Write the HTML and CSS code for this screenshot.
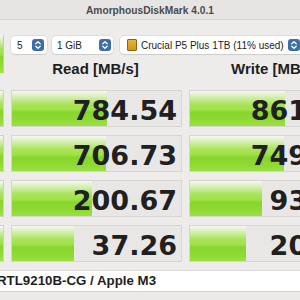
FILE: index.html
```html
<!DOCTYPE html>
<html>
	<head>
		<meta charset="UTF-8">
		<title>AmorphousDiskMark</title>
		<link rel="stylesheet" href="styles.css">
	</head>
	<body>
		<div class="window">
			<div class="titlebar">AmorphousDiskMark 4.0.1</div>
			<div class="bench">
				<div class="all green"></div>
				<div class="toolbar">
					<div class="select count">
						<span class="label">5</span>
						<span class="stepper"><svg width="12" height="12" viewBox="0 0 12 12"><path d="M3.8 4.8 6 2.8 8.2 4.8M3.8 7.2 6 9.2 8.2 7.2" fill="none" stroke="#fff" stroke-width="1.3" stroke-linecap="round" stroke-linejoin="round"/></svg></span>
					</div>
					<div class="select size">
						<span class="label">1 GiB</span>
						<span class="stepper"><svg width="12" height="12" viewBox="0 0 12 12"><path d="M3.8 4.8 6 2.8 8.2 4.8M3.8 7.2 6 9.2 8.2 7.2" fill="none" stroke="#fff" stroke-width="1.3" stroke-linecap="round" stroke-linejoin="round"/></svg></span>
					</div>
					<div class="select disk">
						<span class="drive"></span>
						<span class="label">Crucial P5 Plus 1TB (11% used)</span>
						<span class="stepper"><svg width="12" height="12" viewBox="0 0 12 12"><path d="M3.8 4.8 6 2.8 8.2 4.8M3.8 7.2 6 9.2 8.2 7.2" fill="none" stroke="#fff" stroke-width="1.3" stroke-linecap="round" stroke-linejoin="round"/></svg></span>
					</div>
				</div>
				<div class="head read-head">Read [MB/s]</div>
				<div class="head write-head">Write [MB/s]</div>

				<div class="stub green"></div>
				<div class="cell"><div class="bar" style="width:95px"></div><div class="value">784.54</div></div>
				<div class="cell"><div class="bar" style="width:95px"></div><div class="value">861.59</div></div>

				<div class="stub green"></div>
				<div class="cell"><div class="bar" style="width:94px"></div><div class="value">706.73</div></div>
				<div class="cell"><div class="bar" style="width:94px"></div><div class="value">749.98</div></div>

				<div class="stub green"></div>
				<div class="cell"><div class="bar" style="width:80px"></div><div class="value">200.67</div></div>
				<div class="cell"><div class="bar" style="width:72px"></div><div class="value">93.02</div></div>

				<div class="stub green"></div>
				<div class="cell"><div class="bar" style="width:62px"></div><div class="value">37.26</div></div>
				<div class="cell"><div class="bar" style="width:56px"></div><div class="value">20.43</div></div>
			</div>
			<div class="info">RTL9210B-CG / Apple M3</div>
			<div class="footer"></div>
		</div>
	</body>
</html>
```

FILE: styles.css
```css
body{
	margin: 0;
	font-family: "Liberation Sans", Arial, sans-serif;
	background: #edeceb;
}
.window{
	width: 300px;
	height: 300px;
	overflow: hidden;
	background: #edeceb;
}
.titlebar{
	height: 20px;
	box-sizing: border-box;
	padding-top: 2px;
	line-height: 18px;
	border-bottom: 1px solid #d8d6d5;
	background: #e7e5e4;
	text-align: center;
	font-size: 10.2px;
	font-weight: bold;
	color: #4b4b4b;
}
.bench{
	display: grid;
	grid-template-columns: 4px 171px 171px;
	grid-template-rows: 18px 20px repeat(4, 37px);
	column-gap: 7px;
	row-gap: 8px;
	margin-top: 16px;
}
.green{
	background: linear-gradient(#f5f9f0 0%, #d6efb7 15%, #abe45c 35%, #9fe246 50%, #88d52c 58%, #8fda34 80%, #a0e24a 100%);
}
.all{
	grid-row: 1 / 3;
	align-self: start;
	height: 38px;
	margin-top: -1px;
	border-right: 1px solid #c8c8c8;
	box-sizing: border-box;
}
.stub{
	border: 1px solid #cfcfce;
	border-left: none;
}
.toolbar{
	grid-column: 2 / 4;
	display: flex;
	align-items: center;
	gap: 5px;
}
.select{
	height: 18px;
	box-sizing: border-box;
	display: flex;
	align-items: center;
	background: #fff;
	border-radius: 4px;
	box-shadow: 0 0 0 0.5px rgba(0,0,0,0.12), 0 1px 1px rgba(0,0,0,0.08);
	font-size: 10px;
	color: #222;
	flex-shrink: 0;
}
.label{
	flex: 1;
	white-space: nowrap;
}
.count{
	width: 36px;
	padding: 0 3px 0 6px;
}
.size{
	width: 61px;
	padding: 0 2px 0 5px;
}
.disk{
	width: 183px;
	margin-left: 2px;
	padding: 0 3px 0 7px;
	gap: 4px;
}
.drive{
	width: 10px;
	height: 12px;
	box-sizing: border-box;
	background: linear-gradient(#e6b43a, #cf9518);
	border: 1px solid #8a6414;
	border-radius: 1px;
}
.stepper{
	width: 12px;
	height: 12px;
	border-radius: 3px;
	background: #3e6ea6;
	display: flex;
}
.head{
	align-self: start;
	margin-top: -1px;
	line-height: 15px;
	font-size: 15px;
	font-weight: bold;
	color: #1e1e1e;
	white-space: nowrap;
}
.read-head{
	grid-column: 2;
	text-align: center;
	padding-right: 2px;
}
.write-head{
	grid-column: 3;
	padding-left: 42px;
}
.cell{
	display: grid;
	background: #e8e7e6;
	border: 1px solid #d6d5d4;
	overflow: hidden;
}
.bar, .value{
	grid-area: 1 / 1;
}
.bar{
	background: linear-gradient(#f5f9f0 0%, #d6efb7 15%, #abe45c 35%, #9fe246 50%, #88d52c 58%, #8fda34 80%, #a0e24a 100%);
}
.value{
	justify-self: end;
	padding-right: 4px;
	margin-top: 2px;
	line-height: 35px;
	font-family: "DejaVu Sans", Verdana, sans-serif;
	font-size: 27px;
	font-weight: bold;
	color: #202020;
}
.info{
	margin-top: 8px;
	height: 21px;
	box-sizing: border-box;
	background: #fff;
	border-top: 1px solid #dcdcdc;
	line-height: 20px;
	text-indent: -3px;
	font-size: 13.3px;
	font-weight: bold;
	color: #1e1e1e;
	white-space: nowrap;
}
.footer{
	height: 17px;
	box-sizing: border-box;
	border-top: 1px solid #d3d2d1;
	border-bottom: 2px solid #7f868e;
	background: #ebeae9;
}
```
